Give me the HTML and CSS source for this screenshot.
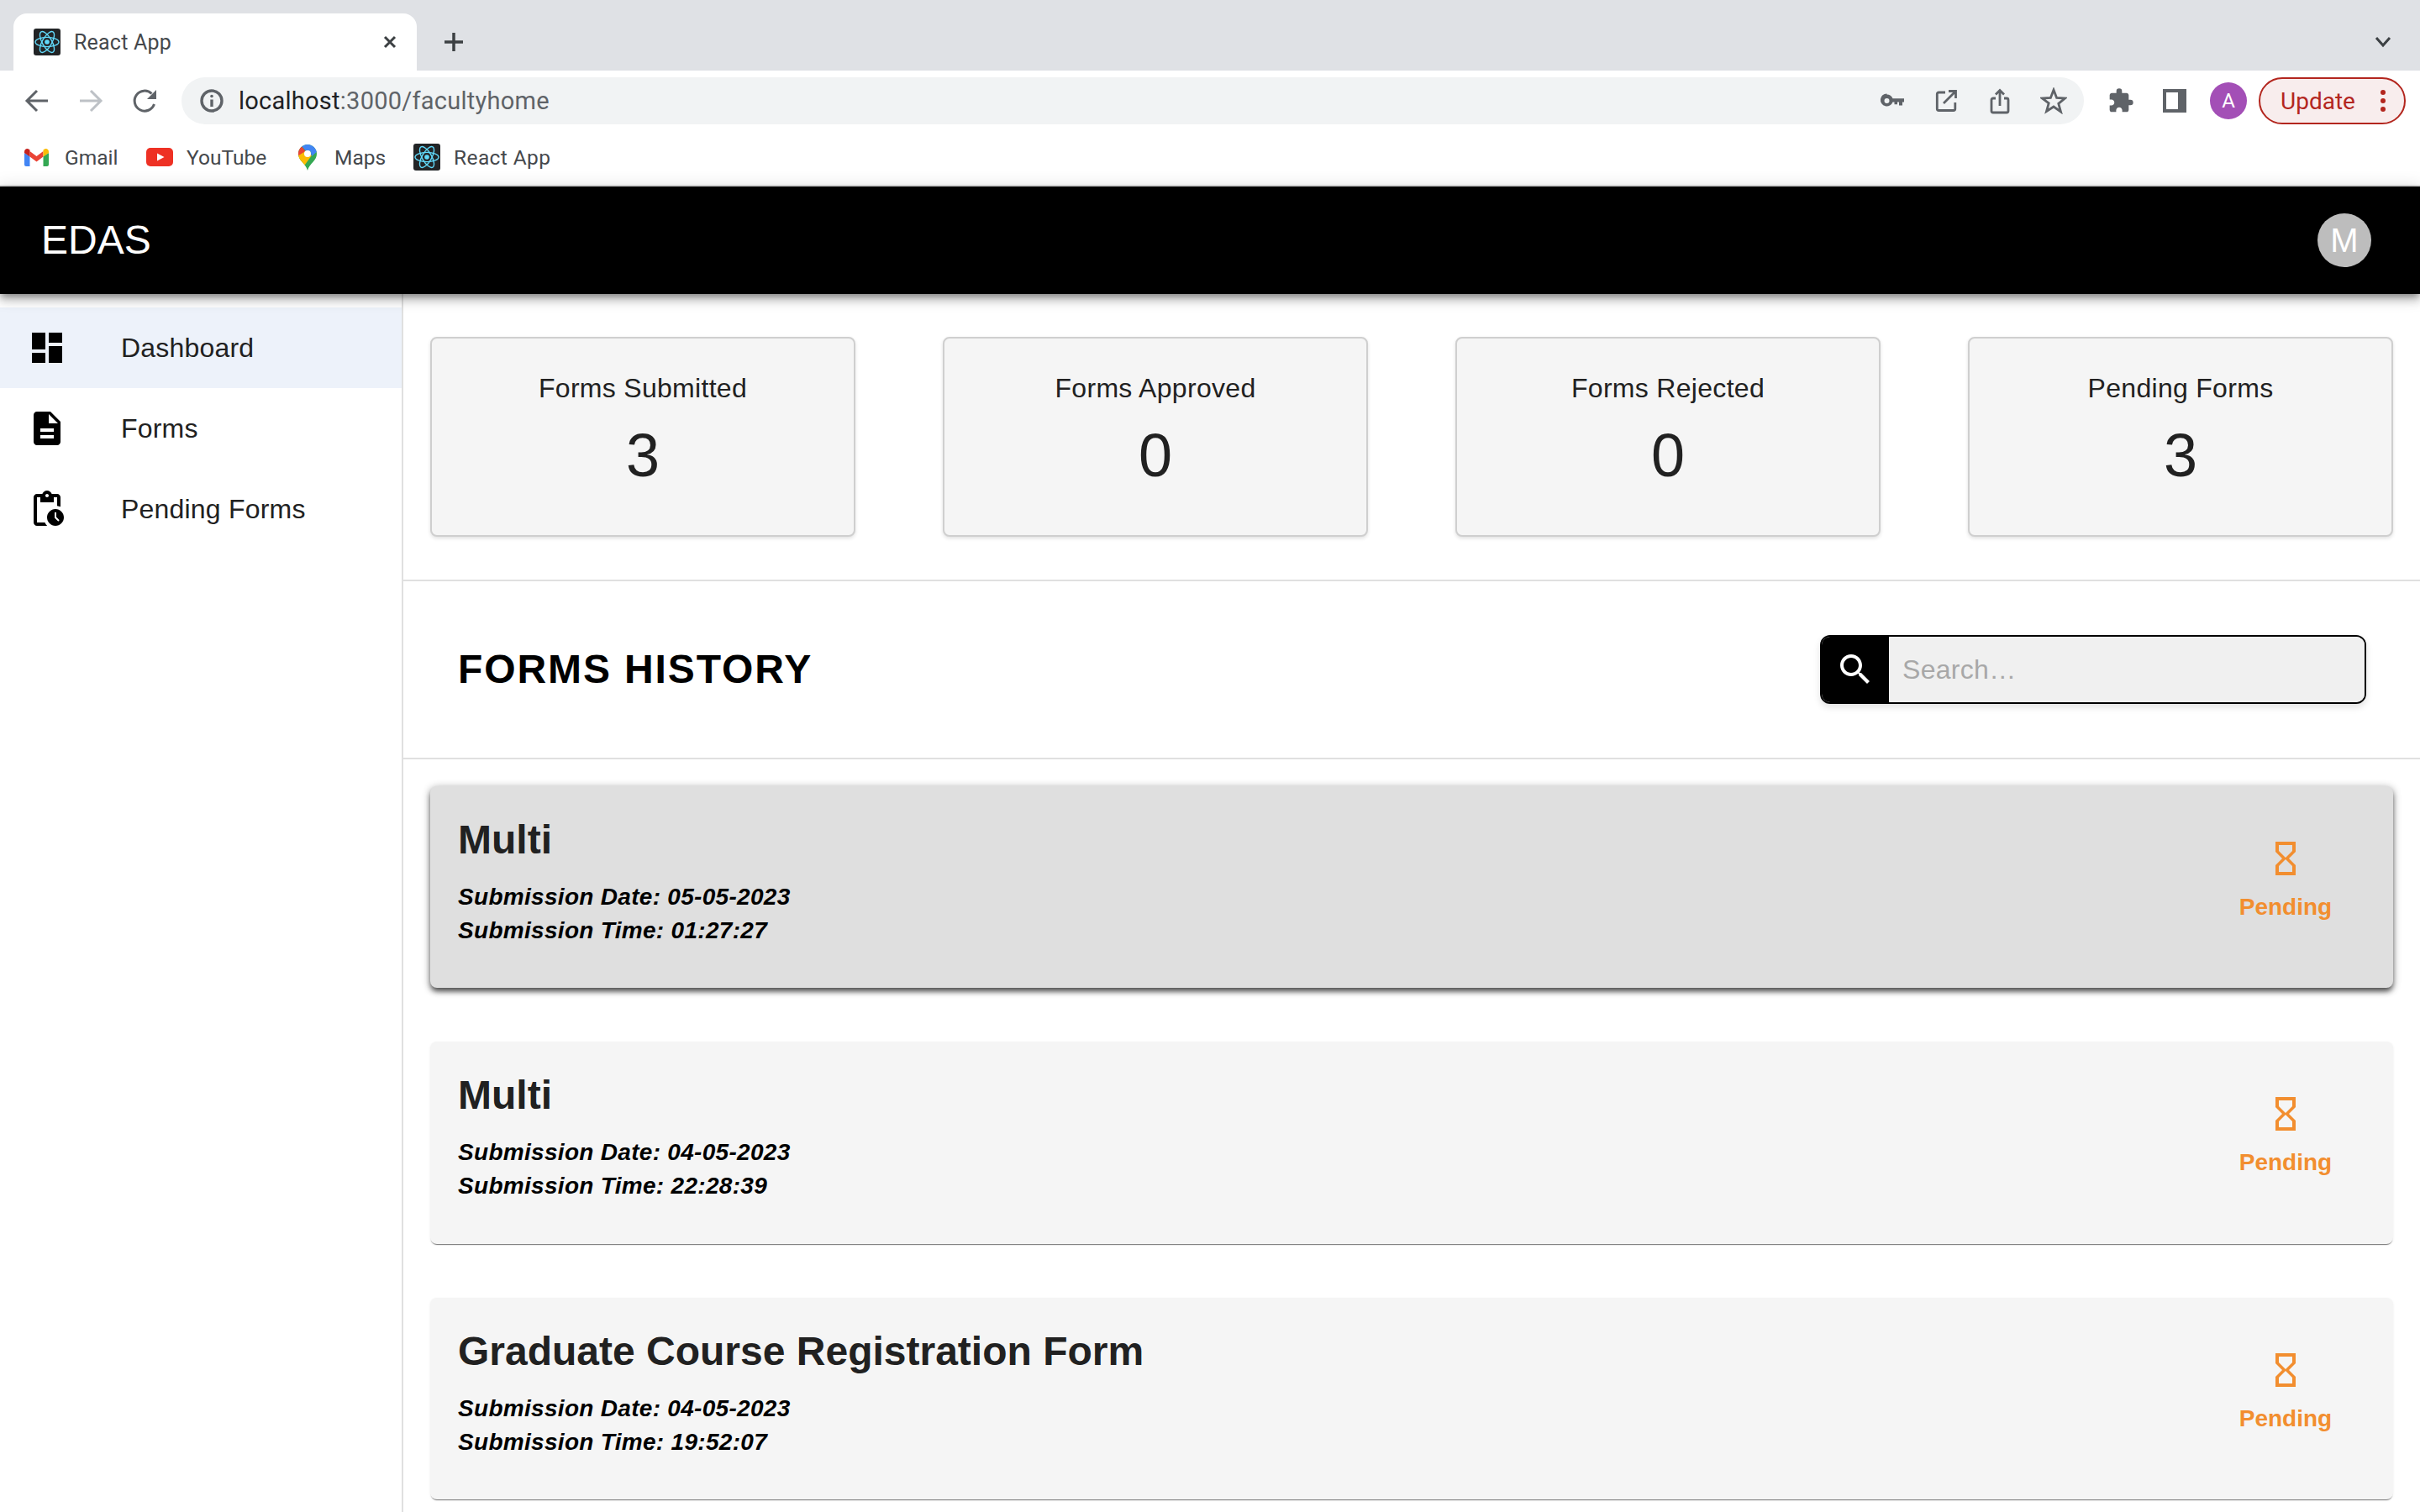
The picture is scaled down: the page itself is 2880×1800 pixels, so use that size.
FILE: index.html
```html
<!DOCTYPE html>
<html lang="en">

<head>
    <meta charset="UTF-8">
    <title>React App</title>
    <link rel="stylesheet" href="styles.css">
</head>

<body>
    <svg class="sprites" width="0" height="0">
        <symbol id="react-logo" viewBox="0 0 32 32">
            <rect width="32" height="32" rx="3" fill="#222426" />
            <g fill="none" stroke="#61dafb" stroke-width="1.400">
                <ellipse cx="16" cy="16" rx="14" ry="5.600" />
                <ellipse cx="16" cy="16" rx="14" ry="5.600" transform="rotate(60 16 16)" />
                <ellipse cx="16" cy="16" rx="14" ry="5.600" transform="rotate(120 16 16)" />
            </g>
            <circle cx="16" cy="16" r="2.800" fill="#61dafb" />
        </symbol>
        <symbol id="hourglass" viewBox="0 0 24 24">
            <path d="M6 2v6h.01L6 8.01 10 12l-4 4 .01.01H6V22h12v-5.99h-.01L18 16l-4-4 4-3.99-.01-.01H18V2H6zm10 14.500V20H8v-3.500l4-4 4 4zm-4-5l-4-4V4h8v3.500l-4 4z" />
        </symbol>
        <clipPath id="pin-shape">
            <path d="M11 0C5 0 0 5 0 11c0 4 1.800 6.800 4.400 9.800C7.200 24 9.900 26.600 11 31c1.100-4.400 3.800-7 6.600-10.200C20.200 17.800 22 15 22 11 22 5 17 0 11 0z" />
        </clipPath>
    </svg>

    <!-- browser chrome -->
    <div class="tabstrip">
        <div class="tab">
            <svg class="favicon"><use href="#react-logo" /></svg>
            <span class="tab_title">React App</span>
            <svg class="tab_close" viewBox="0 0 20 20"><path d="M4 4l12 12M16 4L4 16" /></svg>
        </div>
        <svg class="tab_new" viewBox="0 0 28 28"><path d="M14 3v22M3 14h22" /></svg>
        <svg class="tab_list" viewBox="0 0 20 14"><path d="M2 2l8 9 8-9" /></svg>
    </div>

    <div class="toolbar">
        <svg class="tool_icon" viewBox="0 0 32 32"><path d="M29 16H5M16 4L4 16l12 12" /></svg>
        <svg class="tool_icon tool_icon_off" viewBox="0 0 32 32"><path d="M3 16h24M16 4l12 12-12 12" /></svg>
        <svg class="tool_icon tool_reload" viewBox="0 0 32 32"><path d="M27.500 20A12 12 0 1 1 24.500 7.500" /><path class="solid" d="M30 3v11H19z" /></svg>
        <div class="urlbar">
            <svg class="info_icon" viewBox="0 0 28 28">
                <circle cx="14" cy="14" r="12" />
                <path d="M14 12.500V21" />
                <circle class="solid" cx="14" cy="8.500" r="1.800" />
            </svg>
            <span class="url"><span class="url_host">localhost</span>:3000/facultyhome</span>
            <div class="url_actions">
                <svg class="url_icon" viewBox="0 0 32 32">
                    <path class="solid" fill-rule="evenodd" d="M9.500 8.500a7.500 7.500 0 0 1 7 4.700H30v4.200h-2v4h-4v-4h-2v2.800h-3.500v-2.800h-2a7.500 7.500 0 1 1-7-9.900zm0 4.500a3 3 0 1 0 0 6 3 3 0 0 0 0-6z" />
                </svg>
                <svg class="url_icon" viewBox="0 0 32 32"><path d="M15 6H7.300a2 2 0 0 0-2 2v17.500a2 2 0 0 0 2 2h17.500a2 2 0 0 0 2-2V18" /><path d="M13 19L27 5M19 4.500h8.500V13" /></svg>
                <svg class="url_icon" viewBox="0 0 32 32"><path d="M11 13H8a2 2 0 0 0-2 2v13a2 2 0 0 0 2 2h16a2 2 0 0 0 2-2V15a2 2 0 0 0-2-2h-3M16 22V4M11 8.500l5-5 5 5" /></svg>
                <svg class="url_icon" viewBox="0 0 32 32"><path d="M16 3l3.600 9.500 10 .5-7.800 6.300 2.700 9.700L16 23l-8.500 5.500 2.700-9.700L2.400 13l10-.5z" /></svg>
            </div>
        </div>
        <svg class="tool_icon tool_puzzle" viewBox="0 0 24 24">
            <path class="solid" d="M20.500 11H19V7c0-1.100-.9-2-2-2h-4V3.500a2.500 2.500 0 0 0-5 0V5H4c-1.100 0-1.990.9-1.990 2v3.800H3.500c1.490 0 2.700 1.210 2.700 2.700s-1.210 2.700-2.700 2.700H2V20c0 1.100.9 2 2 2h3.800v-1.500c0-1.490 1.210-2.700 2.700-2.700s2.700 1.210 2.700 2.700V22H17c1.100 0 2-.9 2-2v-4h1.500a2.500 2.500 0 0 0 0-5z" />
        </svg>
        <div class="tool_panel"></div>
        <div class="profile">A</div>
        <div class="update">
            <span>Update</span>
            <div class="update_dots"><i></i><i></i><i></i></div>
        </div>
    </div>

    <div class="bookmarks">
        <div class="bookmark">
            <svg class="bookmark_gmail" viewBox="0 0 29 21">
                <path fill="#4285f4" d="M0 5v14a2 2 0 0 0 2 2h4.500V9z" />
                <path fill="#34a853" d="M29 5v14a2 2 0 0 1-2 2h-4.500V9z" />
                <path fill="#ea4335" d="M6.500 3l8 6 8-6v6.500l-8 6-8-6z" />
                <path fill="#c5221f" d="M0 3.500C0 .6 3.300-1 5.500.7l1 .8v8L0 5z" />
                <path fill="#fbbc04" d="M29 3.500C29 .6 25.700-1 23.500.7l-1 .8v8L29 5z" />
            </svg>
            <span>Gmail</span>
        </div>
        <div class="bookmark">
            <svg class="bookmark_youtube" viewBox="0 0 32 22">
                <rect width="32" height="22" rx="5" fill="#ee3124" />
                <path fill="#fff" d="M13 6.500l8.500 4.500-8.500 4.500z" />
            </svg>
            <span>YouTube</span>
        </div>
        <div class="bookmark">
            <svg class="bookmark_maps" viewBox="0 0 22 31">
                <g clip-path="url(#pin-shape)">
                    <rect width="22" height="31" fill="#34a853" />
                    <path fill="#fbbc04" d="M-1 13l9-5 8 5-9.500 13H-1z" />
                    <path fill="#ea4335" d="M-1 14l9.500-6L3 1-1 4z" />
                    <path fill="#4285f4" d="M3 1l6 6.500 5.500.5 1.500 6 7-6V-1H3z" />
                </g>
                <circle cx="11" cy="11" r="4" fill="#fff" />
            </svg>
            <span>Maps</span>
        </div>
        <div class="bookmark">
            <svg class="bookmark_react"><use href="#react-logo" /></svg>
            <span class="bookmark_wide">React App</span>
        </div>
    </div>

    <!-- app -->
    <header class="appbar">
        <div class="appbar_title">EDAS</div>
        <div class="avatar">M</div>
    </header>

    <div class="layout">
        <nav class="sidebar">
            <div class="nav_item nav_item_active">
                <svg class="nav_icon" viewBox="0 0 24 24"><path d="M3 13h8V3H3v10zm0 8h8v-6H3v6zm10 0h8V11h-8v10zm0-18v6h8V3h-8z" /></svg>
                <span>Dashboard</span>
            </div>
            <div class="nav_item">
                <svg class="nav_icon" viewBox="0 0 24 24"><path d="M14 2H6c-1.100 0-1.990.9-1.990 2L4 20c0 1.100.89 2 1.990 2H18c1.100 0 2-.9 2-2V8l-6-6zm2 16H8v-2h8v2zm0-4H8v-2h8v2zm-3-5V3.500L18.500 9H13z" /></svg>
                <span>Forms</span>
            </div>
            <div class="nav_item">
                <svg class="nav_icon" viewBox="0 0 24 24"><path d="M17 12c-2.760 0-5 2.240-5 5s2.240 5 5 5 5-2.240 5-5-2.240-5-5-5zm1.650 7.350L16.500 17.200V14h1v2.790l1.850 1.850-.7.710zM18 3h-3.180C14.400 1.840 13.300 1 12 1s-2.400.84-2.820 2H6c-1.100 0-2 .9-2 2v15c0 1.100.9 2 2 2h6.110c-.59-.57-1.070-1.250-1.420-2H6V5h2v3h8V5h2v5.080c.71.1 1.380.31 2 .6V5c0-1.100-.9-2-2-2zm-6 2c-.55 0-1-.45-1-1s.45-1 1-1 1 .45 1 1-.45 1-1 1z" /></svg>
                <span>Pending Forms</span>
            </div>
        </nav>

        <main class="content">
            <section class="stats">
                <div class="stat_card">
                    <div class="stat_label">Forms Submitted</div>
                    <div class="stat_value">3</div>
                </div>
                <div class="stat_card">
                    <div class="stat_label">Forms Approved</div>
                    <div class="stat_value">0</div>
                </div>
                <div class="stat_card">
                    <div class="stat_label">Forms Rejected</div>
                    <div class="stat_value">0</div>
                </div>
                <div class="stat_card">
                    <div class="stat_label">Pending Forms</div>
                    <div class="stat_value">3</div>
                </div>
            </section>

            <section class="history_head">
                <h2 class="history_title">FORMS HISTORY</h2>
                <div class="search">
                    <div class="search_btn">
                        <svg class="search_icon" viewBox="0 0 24 24"><path d="M15.500 14h-.79l-.28-.27C15.410 12.590 16 11.110 16 9.500 16 5.910 13.090 3 9.500 3S3 5.910 3 9.500 5.910 16 9.500 16c1.610 0 3.090-.59 4.230-1.570l.27.28v.79l5 4.990L20.490 19l-4.990-5zm-6 0C7.010 14 5 11.990 5 9.500S7.010 5 9.500 5 14 7.010 14 9.500 11.990 14 9.500 14z" /></svg>
                    </div>
                    <input class="search_input" type="text" placeholder="Search…">
                </div>
            </section>

            <section class="history_list">
                <article class="form_card form_card_hover">
                    <div>
                        <h3 class="form_title">Multi</h3>
                        <p class="form_meta">Submission Date: 05-05-2023</p>
                        <p class="form_meta">Submission Time: 01:27:27</p>
                    </div>
                    <div class="form_status">
                        <svg class="status_icon"><use href="#hourglass" /></svg>
                        <div class="status_text">Pending</div>
                    </div>
                </article>
                <article class="form_card">
                    <div>
                        <h3 class="form_title">Multi</h3>
                        <p class="form_meta">Submission Date: 04-05-2023</p>
                        <p class="form_meta">Submission Time: 22:28:39</p>
                    </div>
                    <div class="form_status">
                        <svg class="status_icon"><use href="#hourglass" /></svg>
                        <div class="status_text">Pending</div>
                    </div>
                </article>
                <article class="form_card">
                    <div>
                        <h3 class="form_title">Graduate Course Registration Form</h3>
                        <p class="form_meta">Submission Date: 04-05-2023</p>
                        <p class="form_meta">Submission Time: 19:52:07</p>
                    </div>
                    <div class="form_status">
                        <svg class="status_icon"><use href="#hourglass" /></svg>
                        <div class="status_text">Pending</div>
                    </div>
                </article>
            </section>
        </main>
    </div>
</body>

</html>
```

FILE: styles.css
```css
* {
    box-sizing: border-box;
}

html,
body {
    height: 100%;
}

body {
    margin: 0;
    overflow: hidden;
    font-family: "Liberation Sans", Arial, sans-serif;
    color: #212121;
    background-color: #fff;
}

.sprites {
    position: absolute;
}

/* browser chrome */
.tabstrip,
.toolbar,
.bookmarks {
    font-family: Roboto, "Noto Sans", sans-serif;
}

.tabstrip {
    display: flex;
    align-items: flex-end;
    height: 84px;
    padding-left: 16px;
    background-color: #dfe1e5;
}

.tab {
    display: flex;
    align-items: center;
    width: 480px;
    height: 68px;
    padding: 0 22px 0 24px;
    border-radius: 16px 16px 0 0;
    background-color: #fff;
}

.favicon {
    width: 32px;
    height: 32px;
    flex: none;
}

.tab_title {
    flex: 1;
    margin-left: 16px;
    font-size: 25px;
    letter-spacing: .2px;
    color: #45484c;
}

.tab_close {
    width: 20px;
    height: 20px;
    fill: none;
    stroke: #3c4043;
    stroke-width: 3;
}

.tab_new {
    width: 28px;
    height: 28px;
    margin: 0 0 20px 30px;
    fill: none;
    stroke: #3c4043;
    stroke-width: 3.500;
}

.tab_list {
    width: 20px;
    height: 14px;
    margin: 0 34px 27px auto;
    fill: none;
    stroke: #3c4043;
    stroke-width: 3;
}

.toolbar {
    display: flex;
    align-items: center;
    height: 64px;
    padding: 8px 17px 0 28px;
    background-color: #fff;
}

.tool_icon {
    flex: none;
    width: 32px;
    height: 32px;
    margin-right: 32px;
    fill: none;
    stroke: #5f6368;
    stroke-width: 3;
}

.tool_icon_off {
    stroke: #bdc1c6;
}

.tool_reload {
    margin-right: 28px;
}

.solid {
    fill: #5f6368;
    stroke: none;
}

.urlbar {
    display: flex;
    align-items: center;
    flex: none;
    width: 2264px;
    height: 56px;
    padding: 0 20px 0 22px;
    border-radius: 28px;
    background-color: #f1f3f4;
}

.info_icon {
    width: 28px;
    height: 28px;
    fill: none;
    stroke: #5f6368;
    stroke-width: 3.400;
}

.url {
    margin-left: 18px;
    font-size: 29px;
    letter-spacing: .25px;
    color: #5f6368;
}

.url_host {
    color: #202124;
}

.url_actions {
    display: flex;
    align-items: center;
    gap: 32px;
    margin-left: auto;
}

.url_icon {
    width: 32px;
    height: 32px;
    fill: none;
    stroke: #5f6368;
    stroke-width: 2.800;
}

.tool_puzzle {
    margin: 0 0 0 28px;
}

.tool_panel {
    flex: none;
    width: 28px;
    height: 28px;
    margin-left: 34px;
    border: 4px solid #5f6368;
    border-right-width: 10px;
}

.profile {
    display: flex;
    align-items: center;
    justify-content: center;
    flex: none;
    width: 44px;
    height: 44px;
    margin-left: 28px;
    border-radius: 50%;
    font-size: 24px;
    color: #fff;
    background-color: #a34fb6;
}

.update {
    display: flex;
    align-items: center;
    flex: none;
    width: 175px;
    height: 56px;
    margin-left: 14px;
    padding-left: 24px;
    border: 2px solid #b3261e;
    border-radius: 28px;
    font-size: 28px;
    color: #b3261e;
    background-color: #f8eded;
}

.update_dots {
    display: flex;
    flex-direction: column;
    gap: 4px;
    margin-left: 30px;
}

.update_dots i {
    display: block;
    width: 6px;
    height: 6px;
    border-radius: 50%;
    background-color: #b3261e;
}

.bookmarks {
    display: grid;
    grid-template-columns: 144px 180px 138px auto;
    align-items: center;
    height: 74px;
    padding: 6px 0 0 29px;
    border-bottom: 2px solid #e3e3e3;
    background-color: #fff;
    font-size: 24.500px;
    color: #45484c;
}

.bookmark {
    display: flex;
    align-items: center;
}

.bookmark_wide {
    letter-spacing: .4px;
}

.bookmark_gmail {
    width: 29px;
    height: 21px;
    margin-right: 19px;
}

.bookmark_youtube {
    width: 32px;
    height: 22px;
    margin: 0 16px 0 1px;
}

.bookmark_maps {
    width: 22px;
    height: 31px;
    margin: 0 21px 0 2px;
}

.bookmark_react {
    width: 32px;
    height: 32px;
    margin: 0 16px 0 1px;
}

/* app */
.appbar {
    position: relative;
    z-index: 2;
    display: flex;
    align-items: center;
    justify-content: space-between;
    height: 128px;
    padding: 0 58px 0 49px;
    background-color: #000;
    color: #fff;
    box-shadow: 0 4px 8px -2px rgba(0, 0, 0, .4), 0 8px 10px 1px rgba(0, 0, 0, .14), 0 2px 20px 2px rgba(0, 0, 0, .12);
}

.appbar_title {
    margin-bottom: 2px;
    font-size: 48px;
}

.avatar {
    display: flex;
    align-items: center;
    justify-content: center;
    width: 64px;
    height: 64px;
    border-radius: 50%;
    font-size: 40px;
    background-color: #bdbdbd;
}

.layout {
    display: flex;
    height: 1450px;
}

.sidebar {
    flex: none;
    width: 480px;
    padding-top: 16px;
    border-right: 2px solid #e0e0e0;
}

.nav_item {
    display: flex;
    align-items: center;
    height: 96px;
    padding-left: 32px;
    font-size: 32px;
    letter-spacing: .2px;
}

.nav_item_active {
    background-color: #edf2fa;
}

.nav_icon {
    flex: none;
    width: 48px;
    height: 48px;
    margin-right: 64px;
    fill: #000;
}

.content {
    flex: 1;
    min-width: 0;
}

.stats {
    display: grid;
    grid-template-columns: repeat(4, 1fr);
    gap: 104px;
    padding: 51px 32px 51px 32px;
    border-bottom: 2px solid #e0e0e0;
}

.stat_card {
    height: 238px;
    padding-top: 40px;
    border: 2px solid #cfcfcf;
    border-radius: 8px;
    text-align: center;
    background-color: #f5f5f5;
    box-shadow: 0 2px 4px rgba(0, 0, 0, .12);
}

.stat_label {
    font-size: 32px;
    line-height: 38px;
    letter-spacing: .3px;
}

.stat_value {
    margin-top: 21px;
    font-size: 72px;
    line-height: 80px;
}

.history_head {
    display: flex;
    align-items: center;
    justify-content: space-between;
    height: 212px;
    padding: 0 64px 0 65px;
    border-bottom: 2px solid #e0e0e0;
}

.history_title {
    margin: 0 0 2px;
    font-size: 48px;
    font-weight: bold;
    letter-spacing: 1.900px;
    color: #000;
}

.search {
    display: flex;
    width: 650px;
    height: 82px;
    border: 2px solid #000;
    border-radius: 12px;
    overflow: hidden;
    box-shadow: 0 4px 8px rgba(0, 0, 0, .12);
}

.search_btn {
    display: flex;
    align-items: center;
    justify-content: center;
    flex: none;
    width: 80px;
    background-color: #000;
}

.search_icon {
    width: 48px;
    height: 48px;
    fill: #fff;
}

.search_input {
    flex: 1;
    min-width: 0;
    padding: 0 16px;
    border: none;
    font-family: "Liberation Sans", Arial, sans-serif;
    font-size: 32px;
    letter-spacing: .3px;
    color: #212121;
    background-color: #f0f0f0;
}

.search_input::placeholder {
    color: #a8a8a8;
}

.history_list {
    display: flex;
    flex-direction: column;
    gap: 64px;
    padding: 31.500px 32px 0 32px;
}

.form_card {
    display: flex;
    justify-content: space-between;
    height: 240.500px;
    padding: 32px 0 0 33px;
    border-radius: 8px;
    background-color: #f5f5f5;
    box-shadow: 0 2px 1px -1px rgba(0, 0, 0, .5), 0 1px 3px rgba(0, 0, 0, .08);
}

.form_card_hover {
    background-color: #dfdfdf;
    box-shadow: 0 5px 6px -1px rgba(0, 0, 0, .6), 0 2px 10px 1px rgba(0, 0, 0, .3);
}

.form_title {
    margin: 0 0 16px;
    font-size: 48px;
    font-weight: bold;
    line-height: 64px;
}

.form_meta {
    margin: 0;
    font-size: 28px;
    font-style: italic;
    font-weight: bold;
    line-height: 40px;
    letter-spacing: .3px;
    color: #000;
}

.form_status {
    flex: none;
    width: 256px;
    padding-top: 30px;
    text-align: center;
    color: #f28e2f;
}

.status_icon {
    display: block;
    width: 48px;
    height: 48px;
    margin: 0 auto 14px;
    fill: #f28e2f;
}

.status_text {
    font-size: 28px;
    font-weight: bold;
    line-height: 40px;
}
```
